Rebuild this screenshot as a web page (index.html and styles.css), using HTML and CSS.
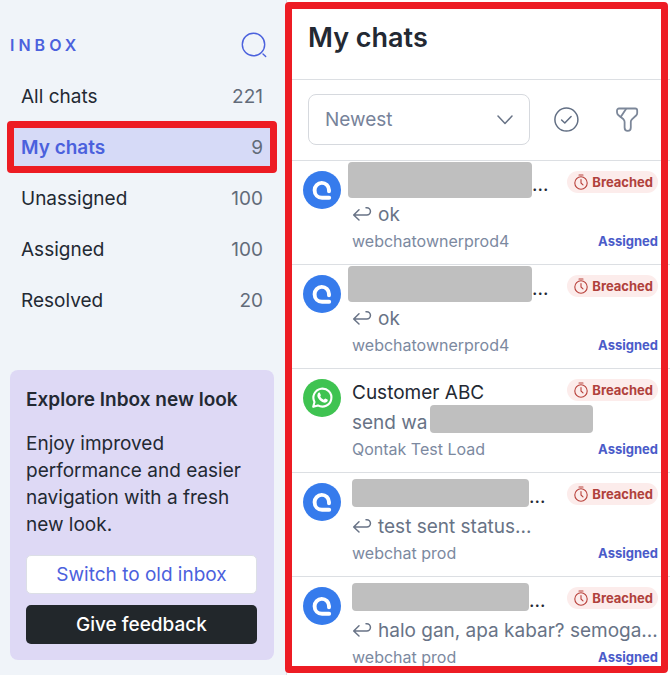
FILE: index.html
```html
<!DOCTYPE html>
<html lang="en">
<head>
    <meta charset="UTF-8">
    <meta name="viewport" content="width=device-width, initial-scale=1.0">
    <title>Inbox</title>
    <link rel="stylesheet" href="styles.css">
</head>
<body>
    <!-- icons used more than once -->
    <svg class="sprite" aria-hidden="true">
        <symbol id="icon-webchat" viewBox="0 0 38 38">
            <circle cx="19" cy="19" r="19" fill="#367bec"/>
            <path d="M26 20.300V19A7.200 7.200 0 0 0 11.600 19.200C11.600 23.800 14.800 26.800 19 26.800H26.200" fill="none" stroke="#fff" stroke-width="3.900" stroke-linecap="round" stroke-linejoin="round"/>
        </symbol>
        <symbol id="icon-timer" viewBox="0 0 16 16">
            <g fill="none" stroke="#b8403a" stroke-width="1.1" stroke-linecap="round" stroke-linejoin="round">
                <circle cx="8" cy="9" r="6.2"/>
                <path d="M6 1h4M8 5.600V9l2 1.800"/>
            </g>
        </symbol>
        <symbol id="icon-reply" viewBox="0 0 20 16">
            <path d="M7 3.800 1.700 9l5.300 5M2 9h12.800a3.500 3.500 0 0 0 0-7.300H14" fill="none" stroke="#687386" stroke-width="1.500" stroke-linecap="round" stroke-linejoin="round"/>
        </symbol>
    </svg>

    <div class="layout">
        <aside class="sidebar">
            <div class="sidebar-header">
                <h2>INBOX</h2>
                <button type="button" class="icon-button" aria-label="Search">
                    <svg width="26" height="26" viewBox="0 0 26 26" fill="none" stroke="#4b61dd" stroke-width="1.4" stroke-linecap="round">
                        <circle cx="12.5" cy="12.5" r="11.2"/>
                        <path d="M22 22l2.7 2.6"/>
                    </svg>
                </button>
            </div>

            <nav class="menu">
                <a href="#" class="menu-item"><span>All chats</span><span class="count">221</span></a>
                <a href="#" class="menu-item active"><span>My chats</span><span class="count">9</span></a>
                <a href="#" class="menu-item"><span>Unassigned</span><span class="count">100</span></a>
                <a href="#" class="menu-item"><span>Assigned</span><span class="count">100</span></a>
                <a href="#" class="menu-item"><span>Resolved</span><span class="count">20</span></a>
            </nav>

            <div class="promo">
                <h3>Explore Inbox new look</h3>
                <p>Enjoy improved performance and easier navigation with a fresh new look.</p>
                <button type="button" class="button button-light">Switch to old inbox</button>
                <button type="button" class="button button-dark">Give feedback</button>
            </div>
        </aside>

        <main class="panel">
            <header class="panel-header">
                <h1>My chats</h1>
            </header>

            <div class="toolbar">
                <div class="sort">
                    <select aria-label="Sort chats">
                        <option>Newest</option>
                        <option>Oldest</option>
                    </select>
                    <svg class="chevron" width="18" height="12" viewBox="0 0 18 12" fill="none" stroke="#687386" stroke-width="1.5" stroke-linecap="round" stroke-linejoin="round">
                        <path d="M2 2l7 7.5L16 2"/>
                    </svg>
                </div>
                <div class="tools">
                    <button type="button" class="icon-button" aria-label="Select chats">
                        <svg width="26" height="26" viewBox="0 0 26 26" fill="none" stroke="#626f84" stroke-width="1.5" stroke-linecap="round" stroke-linejoin="round">
                            <circle cx="13.4" cy="12.600" r="11.5"/>
                            <path d="M8.600 13l3.200 3 6.300-6.500"/>
                        </svg>
                    </button>
                    <button type="button" class="icon-button" aria-label="Filter">
                        <svg width="26" height="26" viewBox="0 0 26 26" fill="none" stroke="#7c8799" stroke-width="1.800" stroke-linecap="round" stroke-linejoin="round">
                            <path d="M5 1.500h16.200a2 2 0 0 1 2 2v2.500c0 1-.4 1.800-1.100 2.500l-4.200 3.800c-.7.700-1.100 1.500-1.100 2.500v5.600c0 2-1.300 3.500-3.100 3.500s-3.100-1.500-3.100-3.500v-5.500c0-1-.4-1.900-1.100-2.600L4.500 8.300C3.600 7.400 3 6.400 3 5.200V3.500a2 2 0 0 1 2-2z"/>
                            <path d="M12 1.900L6.700 10"/>
                        </svg>
                    </button>
                </div>
            </div>

            <ul class="chat-list">
                <li class="chat">
                    <svg class="avatar"><use href="#icon-webchat"/></svg>
                    <div class="chat-body">
                        <div class="line line-name">
                            <span class="name"><span class="mask mask-tall"></span>...</span>
                            <span class="badge"><svg><use href="#icon-timer"/></svg>Breached</span>
                        </div>
                        <div class="line line-message"><svg><use href="#icon-reply"/></svg><span>ok</span></div>
                        <div class="line line-source"><span>webchatownerprod4</span><span class="status">Assigned</span></div>
                    </div>
                </li>
                <li class="chat">
                    <svg class="avatar"><use href="#icon-webchat"/></svg>
                    <div class="chat-body">
                        <div class="line line-name">
                            <span class="name"><span class="mask mask-tall"></span>...</span>
                            <span class="badge"><svg><use href="#icon-timer"/></svg>Breached</span>
                        </div>
                        <div class="line line-message"><svg><use href="#icon-reply"/></svg><span>ok</span></div>
                        <div class="line line-source"><span>webchatownerprod4</span><span class="status">Assigned</span></div>
                    </div>
                </li>
                <li class="chat">
                    <svg class="avatar" viewBox="0 0 38 38">
                        <circle cx="19" cy="19" r="19" fill="#3fc351"/>
                        <path d="M10.2 27.8l1.300-4.900a9 9 0 1 1 3.400 3.500z" fill="none" stroke="#fff" stroke-width="2.1" stroke-linejoin="round"/>
                        <path d="M15.5 13.8c.5-.5 1.200-.4 1.400.1l.9 2c.2.5-.7 1.400-.6 1.700.8 1.500 2 2.500 3.500 3.100.4.100 1.200-1.300 1.700-1.100l2 1c.6.300.4 1.300-.1 2-1 1.200-2.700 1.300-4.500.6-2.500-1-4.300-2.900-5.200-5.100-.5-1.500-.1-3.400.9-4.300z" fill="#fff"/>
                    </svg>
                    <div class="chat-body">
                        <div class="line line-name">
                            <span class="name">Customer ABC</span>
                            <span class="badge"><svg><use href="#icon-timer"/></svg>Breached</span>
                        </div>
                        <div class="line line-message"><span>send wa</span><span class="mask mask-message"></span></div>
                        <div class="line line-source"><span>Qontak Test Load</span><span class="status">Assigned</span></div>
                    </div>
                </li>
                <li class="chat">
                    <svg class="avatar"><use href="#icon-webchat"/></svg>
                    <div class="chat-body">
                        <div class="line line-name">
                            <span class="name"><span class="mask"></span>...</span>
                            <span class="badge"><svg><use href="#icon-timer"/></svg>Breached</span>
                        </div>
                        <div class="line line-message"><svg><use href="#icon-reply"/></svg><span>test sent status...</span></div>
                        <div class="line line-source"><span>webchat prod</span><span class="status">Assigned</span></div>
                    </div>
                </li>
                <li class="chat">
                    <svg class="avatar"><use href="#icon-webchat"/></svg>
                    <div class="chat-body">
                        <div class="line line-name">
                            <span class="name"><span class="mask"></span>...</span>
                            <span class="badge"><svg><use href="#icon-timer"/></svg>Breached</span>
                        </div>
                        <div class="line line-message"><svg><use href="#icon-reply"/></svg><span>halo gan, apa kabar? semoga...</span></div>
                        <div class="line line-source"><span>webchat prod</span><span class="status">Assigned</span></div>
                    </div>
                </li>
            </ul>
        </main>
    </div>
</body>
</html>
```

FILE: styles.css
```css
* {
    box-sizing: border-box;
}

body {
    margin: 0;
    font-family: Inter, "Liberation Sans", sans-serif;
    font-size: 19px;
    color: #232933;
    background-color: #fff;
}

h1, h2, h3, p, ul {
    margin: 0;
    padding: 0;
}

button, select {
    font-family: inherit;
    font-size: 19px;
    cursor: pointer;
}

.sprite {
    display: none;
}

.layout {
    display: grid;
    grid-template-columns: 287px 1fr;
    grid-template-rows: 100vh;
    height: 100vh;
    overflow: hidden;
}

.icon-button {
    display: block;
    padding: 0;
    border: none;
    background: none;
}

.icon-button svg {
    display: block;
}

/* sidebar */
.sidebar {
    padding: 18px 12px 0 10px;
    background-color: #f0f4f9;
    border-right: 1px solid #dcdfe6;
}

.sidebar-header {
    display: flex;
    justify-content: space-between;
    align-items: center;
    height: 53px;
    padding-right: 7px;
}

.sidebar-header h2 {
    font-size: 16px;
    font-weight: 600;
    letter-spacing: 4px;
    color: #4b61dd;
}

.menu-item {
    display: flex;
    justify-content: space-between;
    align-items: center;
    height: 51px;
    padding: 0 11px;
    color: #232933;
    text-decoration: none;
}

.menu-item .count {
    font-weight: 400;
    color: #626b79;
}

.menu-item.active {
    position: relative;
    font-weight: 600;
    color: #4b61dd;
    background-color: #d6daf7;
}

/* red highlight frames */
.menu-item.active::after,
.panel::after {
    content: "";
    position: absolute;
    border: 7px solid #ed1c24;
    border-radius: 4px;
    pointer-events: none;
}

.menu-item.active::after {
    inset: -1px -3px 0;
}

.panel::after {
    inset: 2px 2px 2px -2px;
}

.promo {
    margin-top: 44px;
    padding: 16px;
    padding-right: 17px;
    border-radius: 8px;
    background-color: #ded9f5;
    line-height: 27px;
}

.promo h3 {
    font-size: 19px;
    font-weight: 600;
}

.promo p {
    margin: 17px 0;
}

.button {
    display: block;
    width: 100%;
    height: 39px;
    border: none;
    border-radius: 5px;
}

.button-light {
    margin-bottom: 11px;
    border: 1px solid #dcdfe6;
    color: #4b61dd;
    background-color: #fff;
}

.button-dark {
    font-weight: 500;
    color: #fff;
    background-color: #22272b;
}

/* chats panel */
.panel {
    position: relative;
    min-width: 0;
    overflow: visible;
}

.panel-header {
    display: flex;
    align-items: center;
    height: 80px;
    padding: 0 21px 4px;
    border-bottom: 1px solid #dcdfe3;
}

.panel-header h1 {
    font-size: 27px;
    font-weight: 600;
}

.toolbar {
    display: flex;
    align-items: center;
    gap: 23px;
    padding: 14px 30px 15px 21px;
    border-bottom: 1px solid #dcdfe3;
}

.sort {
    position: relative;
    flex: 1;
}

.sort select {
    display: block;
    width: 100%;
    height: 51px;
    padding: 0 40px 0 16px;
    border: 1px solid #d6d9de;
    border-radius: 8px;
    color: #77839a;
    background-color: #fff;
    appearance: none;
}

.chevron {
    position: absolute;
    right: 16px;
    top: 20px;
    pointer-events: none;
}

.tools {
    display: flex;
    gap: 35px;
}

.chat-list {
    list-style: none;
}

.chat {
    display: flex;
    gap: 11px;
    padding: 9px 12px 10px 16px;
    border-bottom: 1px solid #dcdfe3;
}

.avatar {
    flex: none;
    width: 38px;
    height: 38px;
    margin-top: 1px;
}

.chat-body {
    flex: 1;
    min-width: 0;
}

.line {
    display: flex;
    align-items: center;
    white-space: nowrap;
}

.line-name {
    justify-content: space-between;
    align-items: flex-start;
    height: 30px;
    line-height: 30px;
}

.name {
    display: flex;
}

.line-message {
    gap: 6px;
    height: 28px;
    color: #687386;
}

.line-message svg {
    flex: none;
    width: 20px;
    height: 16px;
}

.line-source {
    justify-content: space-between;
    height: 26px;
    font-size: 16px;
    color: #7c899f;
}

.badge {
    display: flex;
    align-items: center;
    gap: 3px;
    height: 22px;
    margin-top: 1px;
    padding: 0 5px 0 6px;
    border-radius: 11px;
    font-size: 13px;
    font-weight: 700;
    color: #b0413c;
    background-color: #fceceb;
}

.badge svg {
    width: 16px;
    height: 16px;
}

.status {
    font-size: 13px;
    font-weight: 700;
    color: #4a5bc9;
}

/* grey blocks over private names */
.mask {
    width: 177px;
    height: 28px;
    margin-top: -3px;
    border-radius: 4px;
    background-color: #bfbfbf;
}

.mask-tall {
    width: 184px;
    height: 36px;
    margin: -8px 0 0 -4px;
}

.mask-message {
    width: 163px;
    margin: 0 0 6px -4px;
}
```
